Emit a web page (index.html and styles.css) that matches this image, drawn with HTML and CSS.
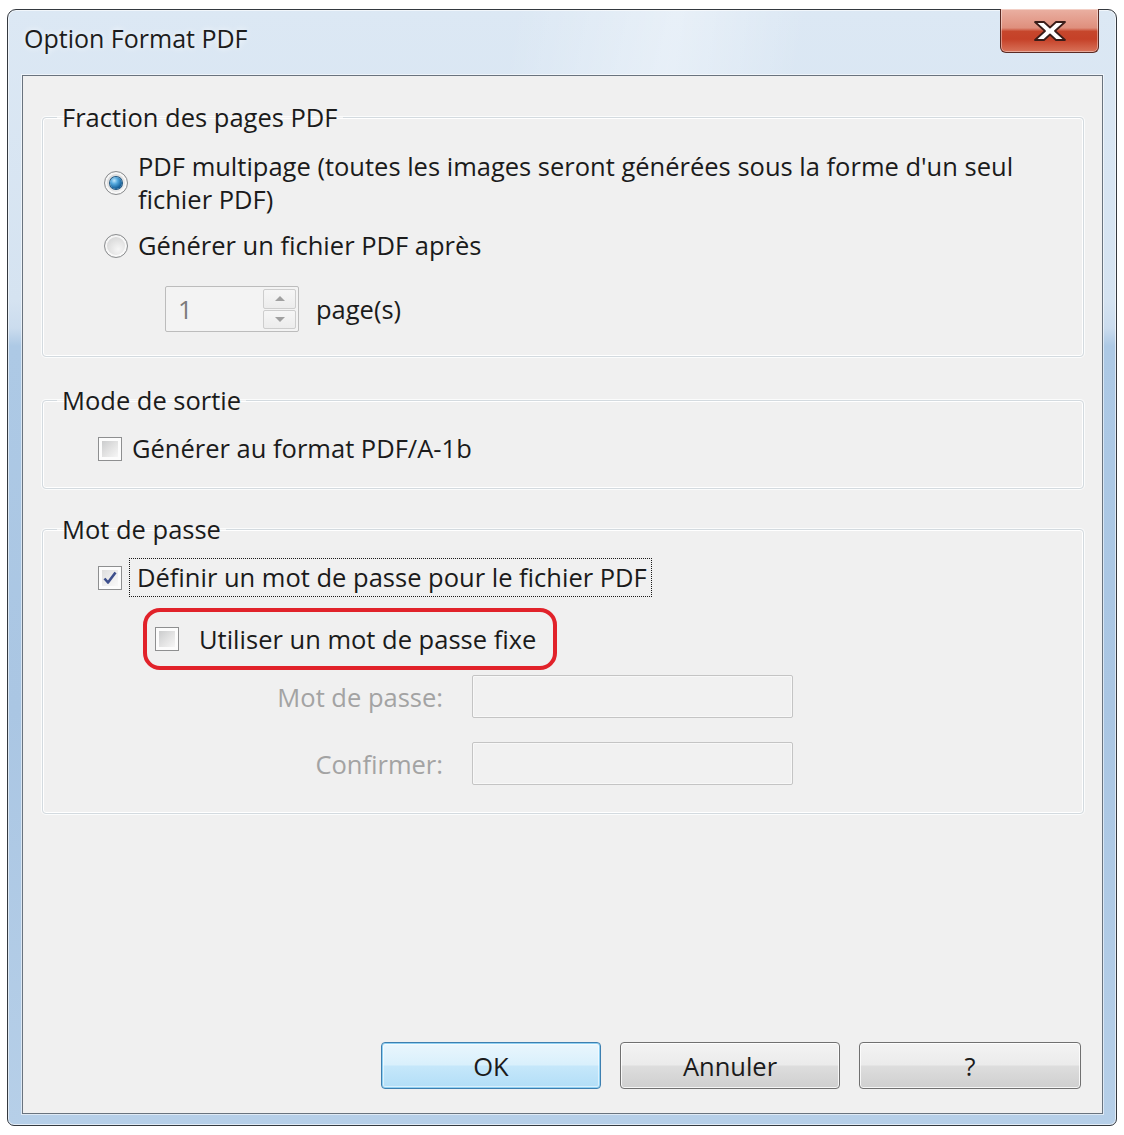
FILE: index.html
```html
<!DOCTYPE html>
<html lang="fr">
<head>
<meta charset="utf-8">
<title>Option Format PDF</title>
<link rel="stylesheet" href="styles.css">
</head>
<body>
<div class="window">
  <div class="titlebar">
    <span class="title">Option Format PDF</span>
    <button class="close" type="button" aria-label="Fermer">
      <svg width="34" height="22" viewBox="0 0 34 22">
        <polygon points="2,2 11,2 17,7.5 23,2 32,2 22,11 32,20 23,20 17,14.5 11,20 2,20 12,11" fill="#fff" stroke="#3a1d19" stroke-width="1.8" stroke-linejoin="round"/>
      </svg>
    </button>
  </div>

  <div class="client">
    <fieldset class="group group-split">
      <legend>Fraction des pages PDF</legend>
      <div class="group-body">
        <div class="option option-multi">
          <span class="radio is-on"></span>
          <span class="option-text">PDF multipage (toutes les images seront générées sous la forme d'un seul<br>fichier PDF)</span>
        </div>
        <div class="option option-second">
          <span class="radio"></span>
          <span class="option-text">Générer un fichier PDF après</span>
        </div>
        <div class="spin-row">
          <span class="spinner">
            <span class="spin-value">1</span>
            <span class="spin-btns">
              <span class="spin-btn"><span class="arrow-up"></span></span>
              <span class="spin-btn"><span class="arrow-down"></span></span>
            </span>
          </span>
          <span class="spin-unit">page(s)</span>
        </div>
      </div>
    </fieldset>

    <fieldset class="group group-output">
      <legend>Mode de sortie</legend>
      <div class="group-body">
        <div class="option">
          <span class="check"></span>
          <span class="option-text">Générer au format PDF/A-1b</span>
        </div>
      </div>
    </fieldset>

    <fieldset class="group group-password">
      <legend>Mot de passe</legend>
      <div class="group-body">
        <div class="option">
          <span class="check is-on">
            <svg width="16" height="16" viewBox="0 0 16 16">
              <path d="M2.5 8.5 L6 12.5 L13.5 2.5" fill="none" stroke="#3d4f8c" stroke-width="2.6" stroke-linejoin="round"/>
            </svg>
          </span>
          <span class="option-text focus-ring">Définir un mot de passe pour le fichier PDF</span>
        </div>
        <div class="option marked">
          <span class="check"></span>
          <span class="option-text">Utiliser un mot de passe fixe</span>
        </div>
        <div class="field-row">
          <span class="field-label">Mot de passe:</span>
          <span class="field-input"></span>
        </div>
        <div class="field-row field-row-second">
          <span class="field-label">Confirmer:</span>
          <span class="field-input"></span>
        </div>
      </div>
    </fieldset>

    <div class="actions">
      <button class="btn btn-default" type="button">OK</button>
      <button class="btn" type="button">Annuler</button>
      <button class="btn btn-help" type="button">?</button>
    </div>
  </div>
</div>
</body>
</html>
```

FILE: styles.css
```css
* {
  box-sizing: border-box;
}

body {
  margin: 0;
  background: #ffffff;
  font-family: "Open Sans", "Noto Sans", sans-serif;
  font-size: 25.5px;
  color: #1b1b1b;
}

/* Aero-style window frame */
.window {
  margin: 9px 0 0 7px;
  width: 1110px;
  height: 1117px;
  border: 1px solid #34393f;
  border-radius: 9px 9px 7px 7px;
  padding: 0 13px 11px 14px;
  display: flex;
  flex-direction: column;
  background:
    linear-gradient(to bottom,
      #dce8f4 0,
      #d5e3f1 290px,
      #cbdcee 318px,
      #adc9e5 336px,
      #aac6e3 700px,
      #b6cfe8 100%);
  box-shadow: inset 0 0 0 1px rgba(255, 255, 255, 0.6);
}

.titlebar {
  height: 65px;
  flex: none;
  display: flex;
  justify-content: space-between;
  align-items: flex-start;
  background:
    linear-gradient(100deg,
      rgba(255, 255, 255, 0) 45%,
      rgba(255, 255, 255, 0.35) 60%,
      rgba(255, 255, 255, 0) 72%);
}

.title {
  margin: 12px 0 0 2px;
  line-height: 32px;
  font-size: 25px;
  color: #1c1c1c;
  text-shadow: 0 0 6px rgba(255, 255, 255, 0.9);
}

.close {
  margin: -1px 4px 0 0;
  width: 99px;
  height: 44px;
  padding: 0;
  border: 1px solid #5a2a23;
  border-top: none;
  border-radius: 0 0 6px 6px;
  display: flex;
  align-items: center;
  justify-content: center;
  background:
    linear-gradient(to bottom,
      #eab0a2 0%,
      #df8f7d 44%,
      #c6462c 52%,
      #c54128 70%,
      #d9735a 100%);
  box-shadow: inset 0 0 0 1px rgba(255, 255, 255, 0.4);
}

/* Dialog client area */
.client {
  flex: 1;
  display: flex;
  flex-direction: column;
  border: 1px solid #69737e;
  background: #f0f0f0;
  padding: 25px 18px 24px 19px;
  box-shadow: 0 0 0 1px rgba(255, 255, 255, 0.55);
}

.group {
  margin: 0;
  min-width: 0;
  border: 1px solid #d3dadf;
  border-radius: 4px;
  box-shadow: inset 0 0 0 1px #ffffff, 0 0 0 1px #fbfcfc;
  padding: 17px 10px 24px 14px;
}

.group legend {
  padding: 0 5px;
  line-height: 32px;
}

.group-body {
  padding-left: 41px;
}

.group-output {
  margin-top: 27px;
  padding-top: 16px;
  padding-bottom: 23px;
}

.group-password {
  margin-top: 24px;
  padding-top: 13px;
  padding-bottom: 28px;
}

/* Radio and check rows */
.option {
  display: flex;
  align-items: center;
  line-height: 33px;
  white-space: nowrap;
}

.option-second {
  margin-top: 13px;
}

.option-text {
  margin-left: 10px;
}

.radio {
  flex: none;
  width: 24px;
  height: 24px;
  margin-left: 6px;
  border-radius: 50%;
  border: 1px solid #8b8d8f;
  background: radial-gradient(circle at 60% 65%, #f6f6f6 0, #e2e2e2 45%, #c9cacb 100%);
  box-shadow: inset 0 0 0 2px rgba(255, 255, 255, 0.75);
  position: relative;
}

.radio.is-on::after {
  content: "";
  position: absolute;
  left: 5px;
  top: 5px;
  width: 12px;
  height: 12px;
  border-radius: 50%;
  background: radial-gradient(circle at 35% 30%, #bfe6fb 0, #55a9dd 30%, #145f99 70%, #0d4270 100%);
  box-shadow: 0 0 0 1px #1d5580;
}

.check {
  flex: none;
  width: 24px;
  height: 24px;
  border: 1px solid #8e8f90;
  padding: 3px;
  display: flex;
  align-items: center;
  justify-content: center;
  background:
    linear-gradient(135deg, #cbcccd 0, #e4e4e4 55%, #f6f6f6 100%) content-box,
    #fbfbfb;
  box-shadow: inset 0 0 0 3px #fcfcfc;
}

.check.is-on {
  padding: 2px;
  background:
    linear-gradient(135deg, #dcdcdc 0, #eeeeee 55%, #fbfbfb 100%) content-box,
    #fbfbfb;
}

.focus-ring {
  margin-left: 7px;
  padding: 2px 4px 2px 7px;
  border: 1px dotted #1a1a1a;
}

.marked {
  margin: 11px 0 0 45px;
  width: 414px;
  height: 62px;
  border: 4px solid #e1222a;
  border-radius: 17px;
  padding-left: 8px;
}

.marked .option-text {
  margin-left: 20px;
}

/* Page count spinner */
.spin-row {
  margin: 24px 0 0 67px;
  display: flex;
  align-items: center;
}

.spinner {
  width: 134px;
  height: 46px;
  display: flex;
  border: 1px solid #bcbcbc;
  border-radius: 2px;
  background: #f3f3f3;
}

.spin-value {
  flex: 1;
  padding-left: 12px;
  line-height: 44px;
  color: #7b7b7b;
}

.spin-btns {
  width: 35px;
  display: flex;
  flex-direction: column;
  padding: 2px 2px 2px 0;
  gap: 1px;
}

.spin-btn {
  flex: 1;
  display: flex;
  align-items: center;
  justify-content: center;
  border: 1px solid #cdcdcd;
  border-radius: 2px;
  background: linear-gradient(#f6f6f6, #ececec);
}

.arrow-up,
.arrow-down {
  width: 0;
  height: 0;
  border-left: 5px solid transparent;
  border-right: 5px solid transparent;
}

.arrow-up {
  border-bottom: 5px solid #a0a0a0;
}

.arrow-down {
  border-top: 5px solid #a0a0a0;
}

.spin-unit {
  margin-left: 17px;
}

/* Disabled password fields */
.field-row {
  margin-top: 5px;
  display: flex;
  align-items: center;
}

.field-row-second {
  margin-top: 24px;
}

.field-label {
  width: 345px;
  text-align: right;
  color: #a3a3a3;
}

.field-input {
  margin-left: 29px;
  width: 321px;
  height: 43px;
  border: 1px solid #c4c4c4;
  border-radius: 2px;
  background: #f1f1f1;
  box-shadow: inset 0 0 0 1px #f8f8f8;
}

/* Dialog buttons */
.actions {
  margin-top: auto;
  margin-right: 3px;
  display: flex;
  justify-content: flex-end;
  gap: 19px;
}

.btn {
  width: 220px;
  height: 47px;
  padding: 0;
  font: inherit;
  color: #1b1b1b;
  border: 1px solid #707070;
  border-radius: 4px;
  background: linear-gradient(to bottom, #f3f3f3 0, #ebebeb 48%, #dddddd 52%, #cfcfcf 100%);
  box-shadow: inset 0 0 0 1px rgba(255, 255, 255, 0.8);
}

.btn-default {
  border-color: #3d7fb0;
  background: linear-gradient(to bottom, #eaf6fd 0, #d9f0fc 48%, #c5e7fa 52%, #b2def7 100%);
  box-shadow: inset 0 0 0 1px #8fd0f2, inset 0 0 0 2px rgba(255, 255, 255, 0.5);
}

.btn-help {
  width: 222px;
}
```
